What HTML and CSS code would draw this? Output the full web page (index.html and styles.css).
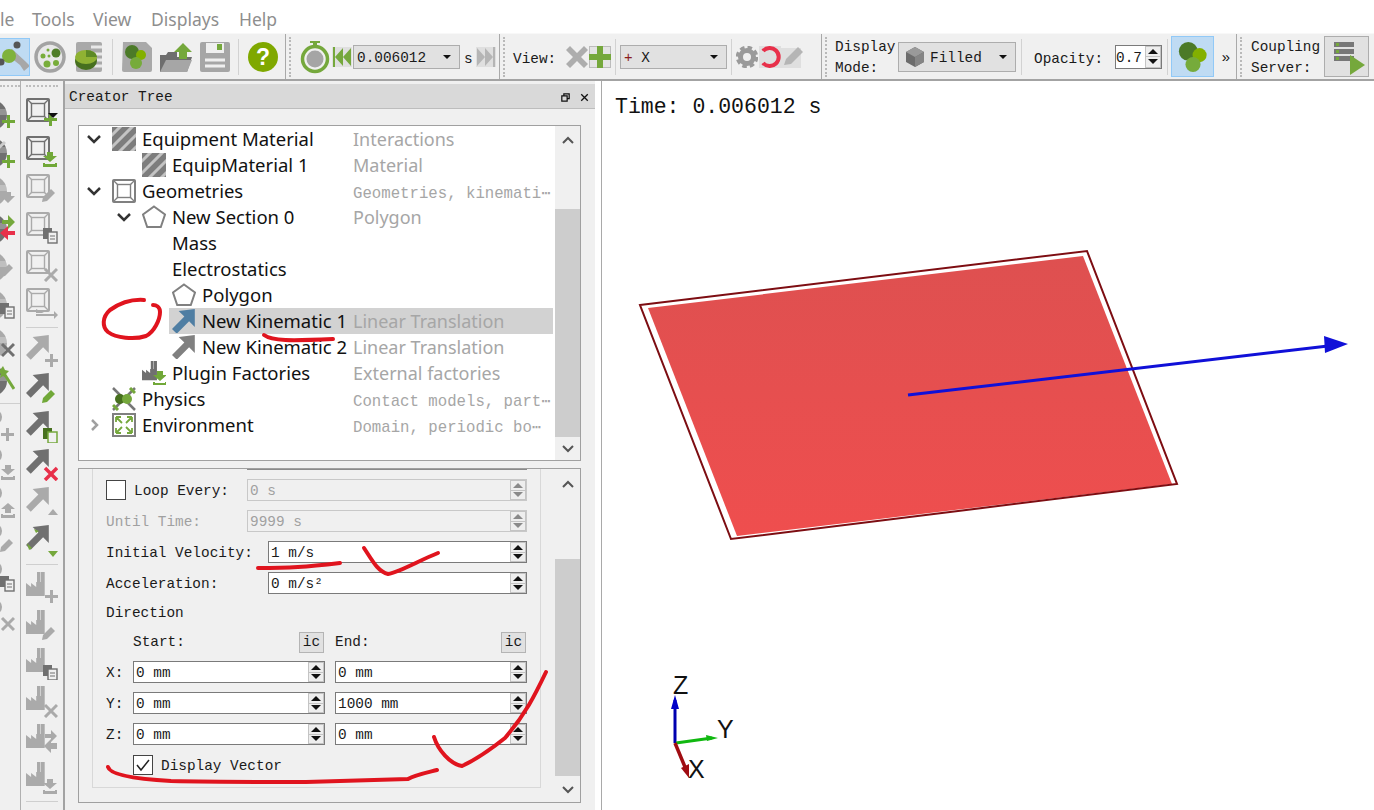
FILE: index.html
```html
<!DOCTYPE html>
<html lang="en">
<head>
<meta charset="utf-8">
<title>Creator Tree</title>
<link rel="stylesheet" href="styles.css">
</head>
<body>
<svg class="defs" aria-hidden="true">
  <defs>
    <g id="frame" fill="none" stroke="currentColor" stroke-width="2"><rect x="1" y="1" width="22" height="22" rx="1"/><rect x="5.5" y="5.5" width="13" height="13" stroke-width="1.4"/><path d="M1 1l4.5 4.5M23 1l-4.5 4.5M1 23l4.5-4.5M23 23l-4.5-4.5" stroke-width="1.4"/></g>
    <g id="arrow" fill="currentColor"><path d="M24 0v19l-6-6L5 26l-5-5L13 8 7 2z" transform="scale(.95)"/></g>
    <g id="factory" fill="currentColor"><path d="M0 24V11l6 4V11l6 4V10h2V0h3v10h2V0h-0 3v24z" transform="scale(.85 1)"/><rect x="11" y="0" width="2.4" height="14"/><rect x="15" y="0" width="2.4" height="14"/></g>
    <g id="sphere"><circle cx="9" cy="17" r="15" fill="currentColor"/><path d="M9 2v15H-6v-6h30v6H9v15H3V2z" fill="#fff" opacity=".25"/></g>
    <g id="bplus" fill="currentColor"><path d="M5 0h3v5h5v3H8v5H5V8H0V5h5z"/></g>
    <g id="bx" fill="none" stroke="currentColor" stroke-width="3"><path d="M1 1l12 12M13 1L1 13"/></g>
    <g id="bpen" fill="currentColor"><path d="M0 14l1-5L9 1l4 4-8 8z"/></g>
    <g id="bcopy"><rect x="0" y="0" width="9" height="11" fill="currentColor"/><rect x="5" y="4" width="9" height="11" fill="#f0f0f0" stroke="currentColor" stroke-width="1.4"/><path d="M7 8h5M7 11h5" stroke="currentColor"/></g>
    <g id="bdown" fill="currentColor"><path d="M4 0h6v4h4l-7 6-7-6h4z"/><path d="M0 11h2v1h10v-1h2v4H0z"/></g>
    <g id="bup" fill="currentColor"><path d="M7 0l7 6h-4v4H4V6H0z"/><path d="M0 11h2v1h10v-1h2v4H0z"/></g>
    <g id="hatch"><rect width="24" height="24" fill="#7d7d7d"/><path d="M-2 10L10-2M-2 22L22-2M6 26L26 6M18 26l8-8" stroke="#c4c4c4" stroke-width="3"/></g>
    <g id="pent" fill="none" stroke="#808080" stroke-width="2"><path d="M12 1.5l11 8-4.2 12.5H5.2L1 9.500z"/></g>
  </defs>
</svg>

<div class="menubar">
  <span class="menu m-file">le</span><span class="menu m-tools">Tools</span><span class="menu m-view">View</span><span class="menu m-disp">Displays</span><span class="menu">Help</span>
</div>

<div class="toolbar">
  <div class="sec sec-a">
    <div class="selbtn sel-a">
      <svg class="i32" viewBox="0 0 32 32"><path d="M6 13L20 24l4 6 6-5-5-5-13-12z" fill="#a7a7a7"/><circle cx="9" cy="15" r="7" fill="#7fb23c"/><circle cx="1" cy="21" r="3.500" fill="#555"/><circle cx="17" cy="4" r="3.500" fill="#555"/></svg>
    </div>
    <svg class="i32" viewBox="0 0 32 32"><circle cx="16" cy="16" r="14" fill="#e8e8e8" stroke="#a3a3a3" stroke-width="3.500"/><circle cx="22" cy="12" r="4.500" fill="#4f7d28"/><circle cx="13" cy="23" r="3.500" fill="#78ad3a"/><circle cx="22" cy="22" r="3" fill="#78ad3a"/><circle cx="9" cy="15" r="2.500" fill="#78ad3a"/><circle cx="14" cy="9" r="1.500" fill="#78ad3a"/><circle cx="15" cy="15" r="1.500" fill="#78ad3a"/></svg>
    <svg class="i32" viewBox="0 0 32 32"><rect x="3" y="1" width="26" height="30" rx="2" fill="#a9a9a9"/><path d="M18 6h11M20 13h9M20 19h9M20 25h9" stroke="#e8e8e8" stroke-width="3"/><ellipse cx="13" cy="20" rx="11" ry="9" fill="#47701f"/><ellipse cx="13" cy="16" rx="11" ry="7" fill="#8fb233"/><path d="M13 16V9a11 7 0 0 1 11 7z" fill="#5d8a26"/></svg>
    <div class="vsep"></div>
    <svg class="i32" viewBox="0 0 32 32"><path d="M2 1h23l6 6v22a2 2 0 0 1-2 2H3a2 2 0 0 1-2-2z" fill="#a9a9a9"/><circle cx="11" cy="11" r="7" fill="#4c7a28"/><circle cx="20" cy="14" r="5" fill="#83b000"/><circle cx="15" cy="22" r="6" fill="#76ab3b"/></svg>
    <svg class="i32" viewBox="0 0 32 32"><path d="M0 31V14h6l2-3h9v5h15l-5 15z" fill="#6e6e6e"/><path d="M0 31l6-12h26l-5 12z" fill="#a6a6a6"/><path d="M23 2l9 9h-5v7h-8v-7h-5z" fill="#75a83c"/></svg>
    <svg class="i32" viewBox="0 0 32 32"><path d="M3 1h26a2 2 0 0 1 2 2v26a2 2 0 0 1-2 2H3a2 2 0 0 1-2-2V3a2 2 0 0 1 2-2z" fill="#a6a6a6"/><rect x="7" y="2" width="18" height="10" fill="#efefef"/><rect x="18" y="3" width="5" height="6" fill="#75a83c"/><path d="M6 19h20M6 25h20" stroke="#efefef" stroke-width="3"/></svg>
    <div class="vsep"></div>
    <svg class="i32" viewBox="0 0 32 32"><circle cx="16" cy="16" r="15" fill="#7fa800"/><text x="16" y="24" class="qmark" text-anchor="middle">?</text></svg>
  </div>

  <div class="sec sec-b">
    <div class="handle"></div>
    <svg class="i30" viewBox="0 0 30 34"><path d="M10 1h10v2h-3v4h-4V3h-3z" fill="#75a83c"/><circle cx="15" cy="19" r="12.500" fill="none" stroke="#75a83c" stroke-width="3.500"/><circle cx="15" cy="19" r="8.500" fill="#a5a5a5"/></svg>
    <svg class="i20 ml2" viewBox="0 0 20 20"><rect width="20" height="20" fill="#dfdfdf"/><path d="M1 0h2v20H1zM11 1v18L3 10zM19 1v18l-8-9z" fill="#75a83c"/></svg>
    <div class="combo combo-time ml1"><span class="combo-text">0.006012</span><span class="tri"></span></div>
    <span class="mono ml4 tb-text">s</span>
    <svg class="i20 ml3" viewBox="0 0 20 20"><rect width="20" height="20" fill="#dfdfdf"/><path d="M1 1l8 9-8 9zM9 1l8 9-8 9zM17 0h2v20h-2z" fill="#b5b5b5"/></svg>
  </div>

  <div class="sec sec-c">
    <div class="handle"></div>
    <span class="mono ml7 w-view tb-text">View:</span>
    <svg class="i22 ml10" viewBox="0 0 22 22"><path d="M4 0l7 7 7-7 4 4-7 7 7 7-4 4-7-7-7 7-4-4 7-7-7-7z" fill="#adadad"/></svg>
    <svg class="i22 ml1" viewBox="0 0 22 22"><rect x=".5" y=".5" width="21" height="21" fill="#e4e4e4" stroke="#bcbcbc"/><path d="M8 0h6v8h8v6h-8v8H8v-8H0V8h8z" fill="#75a83c"/></svg>
    <div class="vsep ml4"></div>
    <div class="combo combo-view ml4"><span class="combo-text"><span class="plus">+</span> X</span><span class="tri"></span></div>
    <div class="vsep ml4"></div>
    <svg class="i22 ml4" viewBox="0 0 22 22"><circle cx="11" cy="11" r="6.500" fill="none" stroke="#9a9a9a" stroke-width="5"/><circle cx="11" cy="11" r="9.500" fill="none" stroke="#9a9a9a" stroke-width="3.500" stroke-dasharray="4.500 3"/></svg>
    <svg class="i22 ml1" viewBox="0 0 22 22"><rect width="22" height="22" fill="#dfdfdf"/><path d="M4 5a9 9 0 1 1 0 12" fill="none" stroke="#e8304a" stroke-width="4"/></svg>
    <svg class="i22" viewBox="0 0 22 22"><rect y="2" width="20" height="20" fill="#dfdfdf"/><path d="M3 19l2-6L17 1l5 5-12 12z" fill="#b5b5b5"/></svg>
  </div>

  <div class="sec sec-d">
    <div class="handle"></div>
    <div class="mono two ml7 w-disp"><span>Display</span><span>Mode:</span></div>
    <div class="combo combo-filled"><svg class="i22" viewBox="0 0 22 22"><path d="M11 1l9 5v10l-9 5-9-5V6z" fill="#6c6c6c"/><path d="M11 1l9 5-9 5-9-5z" fill="#9a9a9a"/><path d="M11 11l9-5v10l-9 5z" fill="#858585"/></svg><span class="combo-text tight">Filled</span><span class="tri"></span></div>
    <div class="vsep ml5"></div>
    <span class="mono ml12 w-op tb-text">Opacity:</span>
    <div class="opbox"><span class="mono">0.7</span><span class="arrows"><span class="up"></span><span class="down"></span></span></div>
    <div class="vsep ml5"></div>
    <div class="selbtn sel-b ml3">
      <svg class="i32" viewBox="0 0 32 34"><circle cx="11" cy="11" r="10" fill="#4c7a28"/><circle cx="23" cy="15" r="7.500" fill="#83b000"/><circle cx="16" cy="25" r="8" fill="#76ab3b"/></svg>
    </div>
    <span class="more">»</span>
  </div>

  <div class="sec sec-e">
    <div class="handle"></div>
    <div class="mono two ml8 w-coup"><span>Coupling</span><span>Server:</span></div>
    <div class="srv">
      <svg class="i38" viewBox="0 0 38 36"><path d="M6 3h20v5H6zM6 10h20v5H6zM6 17h20v5H6z" fill="#777"/><path d="M8 4h3v3H8zM8 11h3v3H8zM8 18h3v3H8z" fill="#75a83c"/><path d="M22 16l15 10-15 10z" fill="#75a83c"/></svg>
    </div>
  </div>
</div>

<div class="main">
  <div class="side side-1">
    <div class="vhandle"></div>
    <div class="col">
      <div class="tool"><svg class="i32 shift" viewBox="0 0 32 32"><use href="#sphere" class="c-dk"/><use href="#bplus" x="19" y="17" class="c-g"/></svg></div>
      <div class="tool"><svg class="i32 shift" viewBox="0 0 32 32"><use href="#sphere" class="c-dk"/><path d="M3 24L22 6M0 15L12 3" stroke="#ccc" stroke-width="3"/><use href="#bplus" x="19" y="19" class="c-g"/></svg></div>
      <div class="tool"><svg class="i32 shift" viewBox="0 0 32 32"><use href="#sphere" class="c-lt"/><path d="M22 18h6v4h4l-7 7-7-7h4z" class="f-lt"/></svg></div>
      <div class="tool"><svg class="i32 shift" viewBox="0 0 32 32"><use href="#sphere" class="c-dk"/><path d="M19 8h6V3l7 7-7 7v-5h-6z" fill="#75a83c"/><path d="M32 19h-7v-5l-8 7 8 7v-5h7z" fill="#e8304a"/></svg></div>
      <div class="tool"><svg class="i32 shift" viewBox="0 0 32 32"><use href="#sphere" class="c-lt"/><use href="#bpen" x="17" y="13" class="c-lt"/></svg></div>
      <div class="tool"><svg class="i32 shift" viewBox="0 0 32 32"><use href="#sphere" class="c-lt"/><use href="#bcopy" x="17" y="15" class="c-dk"/></svg></div>
      <div class="tool"><svg class="i32 shift" viewBox="0 0 32 32"><use href="#sphere" class="c-lt"/><use href="#bx" x="18" y="17" class="c-dk"/></svg></div>
      <div class="tool"><svg class="i32 shift" viewBox="0 0 32 32"><use href="#sphere" class="c-dk"/><path d="M17 6l3-4 2 4 4 1-3 3 1 4-4-2-3 2 1-4-3-3z" fill="#75a83c"/><path d="M22 11l9 14" stroke="#75a83c" stroke-width="3"/></svg></div>
    </div>
    <div class="hsep"></div>
    <div class="col">
      <div class="tool"><svg class="i32 shift" viewBox="0 0 32 32"><circle cx="11" cy="6" r="8" class="f-lt"/><use href="#bplus" x="18" y="17" class="c-lt"/></svg></div>
      <div class="tool"><svg class="i32 shift" viewBox="0 0 32 32"><circle cx="11" cy="6" r="8" class="f-lt"/><use href="#bdown" x="18" y="16" class="c-lt"/></svg></div>
      <div class="tool"><svg class="i32 shift" viewBox="0 0 32 32"><circle cx="11" cy="6" r="8" class="f-lt"/><use href="#bup" x="18" y="16" class="c-lt"/></svg></div>
      <div class="tool"><svg class="i32 shift" viewBox="0 0 32 32"><circle cx="11" cy="6" r="8" class="f-lt"/><use href="#bpen" x="17" y="13" class="c-lt"/></svg></div>
      <div class="tool"><svg class="i32 shift" viewBox="0 0 32 32"><circle cx="11" cy="6" r="8" class="f-lt"/><use href="#bcopy" x="17" y="13" class="c-dk"/></svg></div>
      <div class="tool"><svg class="i32 shift" viewBox="0 0 32 32"><circle cx="11" cy="6" r="8" class="f-lt"/><use href="#bx" x="18" y="16" class="c-lt"/></svg></div>
    </div>
  </div>

  <div class="side side-2">
    <div class="vhandle"></div>
    <div class="col">
      <div class="tool"><svg class="i32" viewBox="0 0 32 32"><use href="#frame" class="c-dk"/><use href="#bplus" x="18" y="15" class="c-g"/><path d="M22 15h10l-5 5z" fill="#111"/></svg></div>
      <div class="tool"><svg class="i32" viewBox="0 0 32 32"><use href="#frame" class="c-dk"/><use href="#bdown" x="17" y="16" class="c-g"/></svg></div>
      <div class="tool"><svg class="i32" viewBox="0 0 32 32"><use href="#frame" class="c-lt"/><use href="#bpen" x="16" y="14" class="c-lt"/></svg></div>
      <div class="tool"><svg class="i32" viewBox="0 0 32 32"><use href="#frame" class="c-lt"/><use href="#bcopy" x="17" y="16" class="c-dk"/></svg></div>
      <div class="tool"><svg class="i32" viewBox="0 0 32 32"><use href="#frame" class="c-lt"/><use href="#bx" x="18" y="18" class="c-lt"/></svg></div>
      <div class="tool"><svg class="i32" viewBox="0 0 32 32"><use href="#frame" class="c-lt"/><path d="M10 21l8 4h-8zM10 26h18v-3l4 4-4 4v-3H10z" class="f-lt"/></svg></div>
    </div>
    <div class="hsep"></div>
    <div class="col">
      <div class="tool"><svg class="i32" viewBox="0 0 32 32"><use href="#arrow" class="c-lt"/><use href="#bplus" x="19" y="19" class="c-lt"/></svg></div>
      <div class="tool"><svg class="i32" viewBox="0 0 32 32"><use href="#arrow" class="c-dk"/><use href="#bpen" x="16" y="16" class="c-g"/></svg></div>
      <div class="tool"><svg class="i32" viewBox="0 0 32 32"><use href="#arrow" class="c-dk"/><rect x="17" y="17" width="9" height="11" fill="#47701f"/><rect x="22" y="21" width="9" height="11" fill="#f0f0f0" stroke="#75a83c" stroke-width="1.500"/></svg></div>
      <div class="tool"><svg class="i32" viewBox="0 0 32 32"><use href="#arrow" class="c-dk"/><path d="M19 19l12 12M31 19L19 31" stroke="#e8304a" stroke-width="3.500"/></svg></div>
      <div class="tool"><svg class="i32" viewBox="0 0 32 32"><use href="#arrow" class="c-lt"/><path d="M22 28l5-6 5 6z" class="f-lt"/></svg></div>
      <div class="tool"><svg class="i32" viewBox="0 0 32 32"><use href="#arrow" class="c-dk"/><path d="M1 18l5 5-3 2zM8 4l5 2-3 2zM22 26h10l-5 6z" fill="#75a83c"/></svg></div>
    </div>
    <div class="hsep"></div>
    <div class="col">
      <div class="tool"><svg class="i32" viewBox="0 0 32 32"><use href="#factory" class="c-lt"/><use href="#bplus" x="19" y="18" class="c-lt"/></svg></div>
      <div class="tool"><svg class="i32" viewBox="0 0 32 32"><use href="#factory" class="c-lt"/><use href="#bpen" x="16" y="16" class="c-lt"/></svg></div>
      <div class="tool"><svg class="i32" viewBox="0 0 32 32"><use href="#factory" class="c-lt"/><use href="#bcopy" x="17" y="17" class="c-dk"/></svg></div>
      <div class="tool"><svg class="i32" viewBox="0 0 32 32"><use href="#factory" class="c-lt"/><use href="#bx" x="18" y="18" class="c-lt"/></svg></div>
      <div class="tool"><svg class="i32" viewBox="0 0 32 32"><use href="#factory" class="c-lt"/><path d="M19 10h6V6l6 6-6 6v-4h-6zM31 19h-6v-4l-7 7 7 7v-4h6z" class="f-lt"/></svg></div>
      <div class="tool"><svg class="i32" viewBox="0 0 32 32"><use href="#factory" class="c-lt"/><use href="#bdown" x="17" y="17" class="c-lt"/></svg></div>
    </div>
    <div class="hsep"></div>
  </div>

  <div class="dock">
    <div class="dock-title">
      <span class="mono">Creator Tree</span>
      <span class="dock-btns">
        <svg class="i11" viewBox="0 0 11 11"><path d="M3.500 3V1h6.500v6H8M1 3.500h6.500V10H1z" fill="none" stroke="#111" stroke-width="1.500"/></svg>
        <svg class="i11" viewBox="0 0 11 11"><path d="M1.500 1.500l8 8M9.500 1.500l-8 8" stroke="#111" stroke-width="1.600"/></svg>
      </span>
    </div>

    <div class="panel tree-panel">
      <div class="tree">
        <div class="row l0"><span class="chev"><svg class="i14" viewBox="0 0 14 14"><path d="M1 4l6 6 6-6" class="chev-d"/></svg></span><div class="body"><svg class="i24" viewBox="0 0 24 24"><use href="#hatch"/></svg><span class="name">Equipment Material</span><span class="desc">Interactions</span></div></div>
        <div class="row l1"><span class="chev"></span><div class="body"><svg class="i24" viewBox="0 0 24 24"><use href="#hatch"/></svg><span class="name">EquipMaterial 1</span><span class="desc">Material</span></div></div>
        <div class="row l0"><span class="chev"><svg class="i14" viewBox="0 0 14 14"><path d="M1 4l6 6 6-6" class="chev-d"/></svg></span><div class="body"><svg class="i24 c-md" viewBox="0 0 24 24"><use href="#frame"/></svg><span class="name">Geometries</span><span class="desc mono-desc">Geometries, kinemati⋯</span></div></div>
        <div class="row l1"><span class="chev"><svg class="i14" viewBox="0 0 14 14"><path d="M1 4l6 6 6-6" class="chev-d"/></svg></span><div class="body"><svg class="i24" viewBox="0 0 24 24"><use href="#pent"/></svg><span class="name">New Section 0</span><span class="desc">Polygon</span></div></div>
        <div class="row l1"><span class="chev"></span><div class="body"><span class="noicon"></span><span class="name">Mass</span></div></div>
        <div class="row l1"><span class="chev"></span><div class="body"><span class="noicon"></span><span class="name">Electrostatics</span></div></div>
        <div class="row l2"><div class="body"><svg class="i24" viewBox="0 0 24 24"><use href="#pent"/></svg><span class="name">Polygon</span></div></div>
        <div class="row l2"><div class="body selected"><svg class="i24" viewBox="0 0 24 24"><path d="M24 0v19l-6-6L5 26l-5-5L13 8 7 2z" fill="#4f7ea3" transform="scale(.95)"/></svg><span class="name">New Kinematic 1</span><span class="desc">Linear Translation</span></div></div>
        <div class="row l2"><div class="body"><svg class="i24 c-md" viewBox="0 0 24 24"><use href="#arrow"/></svg><span class="name">New Kinematic 2</span><span class="desc">Linear Translation</span></div></div>
        <div class="row l1"><span class="chev"></span><div class="body"><svg class="i24 c-dk" viewBox="0 0 24 24"><g transform="scale(.8)"><use href="#factory"/></g><use href="#bdown" x="11" y="10" class="c-g"/></svg><span class="name">Plugin Factories</span><span class="desc">External factories</span></div></div>
        <div class="row l0"><span class="chev"></span><div class="body"><svg class="i24" viewBox="0 0 24 24"><path d="M1 1l22 22M23 1L1 23" stroke="#777" stroke-width="2.500"/><path d="M1 18l5 5M18 1l5 5" stroke="#75a83c" stroke-width="3"/><circle cx="8" cy="12" r="5" fill="#47701f"/><circle cx="15" cy="12" r="5" fill="#75a83c"/></svg><span class="name">Physics</span><span class="desc mono-desc">Contact models, part⋯</span></div></div>
        <div class="row l0"><span class="chev"><svg class="i14" viewBox="0 0 14 14"><path d="M5 2l5 5-5 5" class="chev-r"/></svg></span><div class="body"><svg class="i24" viewBox="0 0 24 24"><rect x="1" y="1" width="22" height="22" fill="none" stroke="#808080" stroke-width="2"/><path d="M4 4l6 6M20 4l-6 6M4 20l6-6M20 20l-6-6M4 4h5M4 4v5M20 4h-5M20 4v5M4 20h5M4 20v-5M20 20h-5M20 20v-5" stroke="#75a83c" stroke-width="1.800" fill="none"/></svg><span class="name">Environment</span><span class="desc mono-desc">Domain, periodic bo⋯</span></div></div>
      </div>
      <div class="sb sb-tree">
        <div class="sb-btn top"><svg class="i12" viewBox="0 0 12 12"><path d="M1 9l5-5 5 5" class="chev-s"/></svg></div>
        <div class="thumb"></div>
        <div class="sb-btn bottom"><svg class="i12" viewBox="0 0 12 12"><path d="M1 3l5 5 5-5" class="chev-s"/></svg></div>
      </div>
    </div>

    <div class="panel form-panel">
      <div class="form-scroll">
        <div class="group">
          <div class="clipline"></div>
          <div class="frow first dis-row">
            <span class="check"></span><span class="mono loop">Loop Every:</span>
            <div class="spin disabled"><span class="mono">0 s</span><span class="arrows"><span class="up"></span><span class="down"></span></span></div>
          </div>
          <div class="frow dis-row">
            <span class="mono lab-a dim">Until Time:</span>
            <div class="spin disabled"><span class="mono">9999 s</span><span class="arrows"><span class="up"></span><span class="down"></span></span></div>
          </div>
          <div class="frow">
            <span class="mono lab-b">Initial Velocity:</span>
            <div class="spin"><span class="mono">1 m/s</span><span class="arrows"><span class="up"></span><span class="down"></span></span></div>
          </div>
          <div class="frow">
            <span class="mono lab-b">Acceleration:</span>
            <div class="spin"><span class="mono">0 m/s²</span><span class="arrows"><span class="up"></span><span class="down"></span></span></div>
          </div>
          <div class="mono dir">Direction</div>
          <div class="se-row">
            <div class="se-cell"><span class="mono">Start:</span><span class="ic mono">ic</span></div>
            <div class="se-cell end"><span class="mono">End:</span><span class="ic mono">ic</span></div>
          </div>
          <div class="frow xyz first-xyz">
            <span class="mono lab-x">X:</span>
            <div class="spin"><span class="mono">0 mm</span><span class="arrows"><span class="up"></span><span class="down"></span></span></div>
            <div class="spin"><span class="mono">0 mm</span><span class="arrows"><span class="up"></span><span class="down"></span></span></div>
          </div>
          <div class="frow xyz">
            <span class="mono lab-x">Y:</span>
            <div class="spin"><span class="mono">0 mm</span><span class="arrows"><span class="up"></span><span class="down"></span></span></div>
            <div class="spin"><span class="mono">1000 mm</span><span class="arrows"><span class="up"></span><span class="down"></span></span></div>
          </div>
          <div class="frow xyz">
            <span class="mono lab-x">Z:</span>
            <div class="spin"><span class="mono">0 mm</span><span class="arrows"><span class="up"></span><span class="down"></span></span></div>
            <div class="spin"><span class="mono">0 mm</span><span class="arrows"><span class="up"></span><span class="down"></span></span></div>
          </div>
          <div class="vec-row">
            <span class="check"><svg class="i16" viewBox="0 0 16 16"><path d="M2 8l4 5 8-10" fill="none" stroke="#222" stroke-width="1.500"/></svg></span>
            <span class="mono">Display Vector</span>
          </div>
        </div>
      </div>
      <div class="sb sb-form">
        <div class="sb-btn top"><svg class="i12" viewBox="0 0 12 12"><path d="M1 9l5-5 5 5" class="chev-s"/></svg></div>
        <div class="thumb"></div>
        <div class="sb-btn bottom"><svg class="i12" viewBox="0 0 12 12"><path d="M1 3l5 5 5-5" class="chev-s"/></svg></div>
      </div>
    </div>
  </div>

  <div class="viewport">
    <div class="time">Time: 0.006012 s</div>
    <svg class="scene" viewBox="602 81 772 729">
      <defs>
        <linearGradient id="plate" x1="0" y1="0" x2="0" y2="1"><stop offset="0" stop-color="#de5050"/><stop offset="1" stop-color="#ef4e4e"/></linearGradient>
      </defs>
      <polygon points="648,308 1083,256 1172,484 737,536" fill="url(#plate)"/>
      <polygon points="640,305 1087,251 1177,484 731,539" fill="none" stroke="#7d0d12" stroke-width="2"/>
      <path d="M908 395L1328 346" stroke="#1010d8" stroke-width="3"/>
      <path d="M1324 336l24 8-23 9z" fill="#1010d8"/>
      <path d="M675 743V700" stroke="#0000b0" stroke-width="3"/>
      <path d="M675 695l-4 14h8z" fill="#0000c8"/>
      <path d="M676 743l36-5" stroke="#10b810" stroke-width="3"/>
      <path d="M718 738l-12-3 1 6z" fill="#10b810"/>
      <path d="M675 743l10 24" stroke="#a00d12" stroke-width="3.500"/>
      <path d="M689 778l-8-10 8-4z" fill="#a00d12"/>
      <text x="673" y="694" class="ax">Z</text>
      <text x="717" y="738" class="ax">Y</text>
      <text x="688" y="778" class="ax">X</text>
    </svg>
  </div>
</div>

<svg class="ink" viewBox="0 0 1374 810" aria-hidden="true">
  <g fill="none" stroke="#e0141e" stroke-width="4" stroke-linecap="round" stroke-linejoin="round">
    <path d="M144 300C130 299 120 303 110 310C102 317 102 327 108 332C116 338 134 340 146 336C154 332 160 320 160 312C160 307 156 305 153 305"/>
    <path d="M264 335C272 341 290 341 333 339"/>
    <path d="M258 568C290 568 305 567 340 563"/>
    <path d="M364 548C372 560 378 572 388 574C400 572 420 560 438 553"/>
    <path d="M546 672C535 695 525 715 505 738C490 750 475 760 462 766C450 764 438 750 434 737"/>
    <path d="M108 767C110 775 135 779 171 781C220 782 270 782 306 782C350 781 380 780 408 779C415 775 425 773 437 770"/>
  </g>
</svg>
</body>
</html>
```

FILE: styles.css
```css
* { box-sizing: border-box; }
html, body { margin: 0; padding: 0; }
body {
  width: 1374px;
  height: 810px;
  overflow: hidden;
  background: #fff;
  display: flex;
  flex-direction: column;
  position: relative;
  font-family: "Noto Sans", sans-serif;
  color: #111;
}
.defs { display: none; }
svg { display: block; flex: none; }
.i32 { width: 32px; height: 32px; }
.i30 { width: 30px; height: 34px; }
.i24 { width: 24px; height: 24px; }
.i22 { width: 22px; height: 22px; }
.i20 { width: 20px; height: 20px; }
.i16 { width: 16px; height: 16px; }
.i14 { width: 14px; height: 14px; }
.i12 { width: 12px; height: 12px; }
.i11 { width: 9px; height: 9px; }
.i38 { width: 38px; height: 36px; }
.c-dk { color: #707070; }
.c-md { color: #808080; }
.c-lt { color: #aaaaaa; }
.c-g { color: #71a838; }
.f-lt { fill: #aaaaaa; }
.qmark { font: bold 23px "Liberation Sans", sans-serif; fill: #fff; }
.mono {
  font-family: "Liberation Mono", monospace;
  font-size: 14.4px;
  line-height: 18px;
  color: #1a1a1a;
  white-space: nowrap;
}

/* menu */
.menubar {
  height: 33px;
  display: flex;
  align-items: center;
  padding-top: 4px;
  font-size: 17.5px;
  color: #8e8e8e;
  flex: none;
}
.menu { white-space: nowrap; }
.m-file { width: 32px; }
.m-tools { width: 61px; }
.m-view { width: 58px; }
.m-disp { width: 88px; }

/* toolbar */
.toolbar {
  height: 48px;
  flex: none;
  display: flex;
  background: #f0f0f0;
  border-top: 1px solid #f8f8f8;
  border-bottom: 2px solid #a3a3a3;
}
.sec {
  display: flex;
  align-items: center;
  border-left: 1px solid #a9a9a9;
  padding-left: 3px;
}
.sec-a { width: 285px; border-left: 0; padding-left: 0; gap: 7px; }
.sec-b { width: 214px; }
.sec-c { width: 322px; }
.sec-d { width: 415px; }
.sec-e { flex: 1; }
.handle {
  width: 3px;
  height: 40px;
  border-left: 2px dotted #b9b9b9;
  flex: none;
}
.sec-b .handle { margin-right: 8px; }
.vsep { width: 1px; height: 36px; background: #d2d2d2; flex: none; }
.sec-a .vsep { margin-right: 1px; }
.ml1 { margin-left: 1px; }
.ml2 { margin-left: 2px; }
.ml3 { margin-left: 3px; }
.ml4 { margin-left: 4px; }
.ml5 { margin-left: 5px; }
.ml7 { margin-left: 7px; }
.ml8 { margin-left: 8px; }
.ml10 { margin-left: 10px; }
.ml12 { margin-left: 12px; }
.tb-text { padding-top: 4px; }
.selbtn {
  background: #bfdbf3;
  border: 1px solid #91c9f7;
  display: flex;
  align-items: center;
  justify-content: center;
  flex: none;
}
.sel-a { width: 30px; height: 38px; margin-right: -3px; border-left: 0; overflow: hidden; justify-content: flex-start; }
.sel-b { width: 43px; height: 41px; }
.combo {
  height: 24px;
  background: #e1e1e1;
  border: 1px solid #adadad;
  display: flex;
  align-items: center;
  flex: none;
  padding: 0 6px 0 3px;
}
.combo-time { width: 107px; }
.combo-view { width: 107px; }
.combo-filled { width: 118px; height: 30px; padding-left: 5px; }
.combo-text {
  font-family: "Liberation Mono", monospace;
  font-size: 14.4px;
  line-height: 18px;
  padding-top: 2px;
  color: #1a1a1a;
  flex: 1;
  white-space: nowrap;
}
.tight { margin-left: 4px; }
.plus { color: #8a1c1c; }
.tri {
  width: 0;
  height: 0;
  border-left: 4px solid transparent;
  border-right: 4px solid transparent;
  border-top: 4px solid #111;
  margin-right: 2px;
}
.w-view { width: 43px; }
.w-disp { width: 63px; }
.w-op { width: 81px; }
.w-coup { width: 73px; }
.two { display: flex; flex-direction: column; line-height: 21px; padding-top: 3px; }
.opbox {
  width: 47px;
  height: 24px;
  background: #fff;
  border: 1px solid #7a7a7a;
  display: flex;
  align-items: stretch;
  justify-content: space-between;
  flex: none;
}
.opbox .mono { line-height: 24px; }
.more { width: 16px; text-align: right; font: 15px "Liberation Sans", sans-serif; color: #111; flex: none; }
.srv {
  width: 45px;
  height: 41px;
  background: #e1e1e1;
  border: 1px solid #adadad;
  display: flex;
  align-items: center;
  justify-content: center;
  flex: none;
}

/* main */
.main { flex: 1; display: flex; min-height: 0; }
.side {
  background: #f0f0f0;
  overflow: hidden;
  flex: none;
}
.side-1 { width: 21px; border-right: 1px solid #b0b0b0; }
.side-2 { width: 44px; border-right: 2px solid #a3a3a3; padding: 0 5px; }
.vhandle {
  height: 14px;
  border-top: 2px dotted #bdbdbd;
  margin-top: 4px;
  margin-bottom: -4px;
}
.col { display: flex; flex-direction: column; }
.tool { height: 38px; padding-top: 3px; }
.shift { margin-left: -17px; }
.hsep { height: 9px; margin-bottom: -4px; position: relative; }
.hsep::after {
  content: "";
  display: block;
  height: 1px;
  background: #cfcfcf;
  margin-top: 4px;
}

/* dock */
.dock {
  width: 530px;
  flex: none;
  background: #f0f0f0;
  display: flex;
  flex-direction: column;
  border-top: 2px solid #f0f0f0;
}
.dock-title {
  height: 25px;
  flex: none;
  margin-top: 1px;
  background: #d9d9d9;
  border-bottom: 1px solid #bdbdbd;
  display: flex;
  align-items: center;
  justify-content: space-between;
  padding: 2px 6px 0 4px;
}
.dock-btns { display: flex; gap: 10px; }
.panel {
  margin-left: 13px;
  width: 503px;
  background: #fff;
  border: 1px solid #a0a0a0;
  display: flex;
  flex: none;
}
.tree-panel { height: 336px; margin-top: 16px; }
.form-panel { height: 335px; margin-top: 7px; background: #f0f0f0; }
.tree { flex: 1; padding-right: 2px; min-width: 0; }
.row {
  height: 26px;
  display: flex;
  align-items: stretch;
  font-size: 18px;
  line-height: 26px;
}
.row .body { flex: 1; display: flex; align-items: center; min-width: 0; }
.chev { width: 27px; flex: none; display: flex; align-items: center; padding-left: 2px; }
.l0 { padding-left: 6px; }
.l1 { padding-left: 36px; }
.l2 { padding-left: 90px; }
.l2 .body { padding-left: 3px; }
.selected { background: #d2d2d2; }
.noicon { width: 24px; flex: none; }
.name { margin-left: 6px; white-space: nowrap; flex: none; font-size: 18.5px; }
.l0 .name { width: 211px; }
.l1 .name { width: 181px; }
.l2 .name { width: 151px; }
.desc { color: #a6a6a6; white-space: nowrap; overflow: hidden; }
.mono-desc { font-family: "Liberation Mono", monospace; font-size: 15.700px; padding-top: 5px; }
.chev-d { fill: none; stroke: #333; stroke-width: 2.500; }
.chev-r { fill: none; stroke: #a0a0a0; stroke-width: 2.500; }
.chev-s { fill: none; stroke: #555; stroke-width: 2; }
.sb {
  width: 25px;
  flex: none;
  background: #f0f0f0;
  display: flex;
  flex-direction: column;
}
.sb-btn { display: flex; align-items: center; justify-content: center; flex: none; }
.thumb { background: #cdcdcd; flex: none; }
.sb-tree .top { height: 28px; }
.sb-tree .thumb { height: 228px; margin-top: 55px; }
.sb-tree .bottom { height: 23px; margin-top: auto; }
.sb-form .top { height: 30px; }
.sb-form .thumb { height: 217px; margin-top: 60px; }
.sb-form .bottom { height: 25px; margin-top: auto; }

/* form */
.form-scroll { flex: 1; padding-left: 13px; padding-right: 14px; }
.group {
  height: 319px;
  border: 1px solid #d8d8d8;
  border-top: 0;
  padding: 0 13px;
  display: flex;
  flex-direction: column;
}
.clipline { height: 1px; background: #8a8a8a; margin-left: 141px; flex: none; }
.frow { height: 22px; margin-top: 9px; display: flex; align-items: center; flex: none; }
.frow > .mono, .vec-row > .mono { padding-top: 2px; }
.spin {
  flex: 1;
  height: 22px;
  background: #fff;
  border: 1px solid #7a7a7a;
  display: flex;
  align-items: stretch;
  justify-content: space-between;
  min-width: 0;
  padding-left: 2px;
}
.spin .mono { line-height: 22px; }
.spin.disabled { background: #f0f0f0; border-color: #c8c8c8; }
.spin.disabled .mono { color: #a0a0a0; }
.arrows { width: 16px; flex: none; display: flex; flex-direction: column; border: 1px solid #c4c4c4; background: #eee; }
.arrows span { flex: 1; display: flex; align-items: center; justify-content: center; }
.arrows .up { border-bottom: 1px solid #c4c4c4; }
.up::after, .down::after {
  content: "";
  width: 0;
  height: 0;
  border-left: 5px solid transparent;
  border-right: 5px solid transparent;
}
.up::after { border-bottom: 5px solid #111; }
.down::after { border-top: 5px solid #111; }
.disabled .up::after { border-bottom-color: #8a8a8a; }
.disabled .down::after { border-top-color: #8a8a8a; }
.check {
  width: 20px;
  height: 20px;
  flex: none;
  background: #fff;
  border: 1px solid #444;
  display: flex;
  align-items: center;
  justify-content: center;
}
.loop { margin-left: 8px; width: 113px; flex: none; }
.lab-a { width: 141px; flex: none; }
.frow > .dim { color: #a0a0a0; }
.lab-b { width: 162px; flex: none; }
.lab-x { width: 27px; flex: none; }
.dir { margin-top: 9px; height: 18px; padding-top: 1px; flex: none; }
.se-row { margin-top: 11px; height: 21px; padding-left: 27px; display: flex; gap: 10px; flex: none; }
.se-cell { width: 192px; display: flex; align-items: center; justify-content: space-between; }
.se-cell > .mono:first-child { padding-bottom: 2px; }
.se-cell .ic { margin-right: 1px; }
.ic {
  width: 25px;
  height: 21px;
  background: #e1e1e1;
  border: 1px solid #b4b4b4;
  text-align: center;
  line-height: 18px;
}
.first-xyz { margin-top: 8px; }
.xyz .spin { flex: none; width: 192px; }
.xyz .spin + .spin { margin-left: 10px; }
.vec-row { margin-top: 10px; padding-left: 27px; display: flex; align-items: center; gap: 8px; height: 20px; flex: none; }

/* viewport */
.viewport {
  flex: 1;
  margin-left: 6px;
  background: #fff;
  border-left: 1px solid #a9a9a9;
  position: relative;
  min-width: 0;
}
.time {
  font-family: "Liberation Mono", monospace;
  font-size: 21.500px;
  line-height: 26px;
  color: #111;
  padding: 13px 0 0 13px;
  position: relative;
  white-space: nowrap;
}
.scene { position: absolute; left: 0; top: 0; width: 772px; height: 729px; }
.ax { font: 25px "Liberation Sans", sans-serif; fill: #111; }
.ink { position: absolute; left: 0; top: 0; width: 1374px; height: 810px; pointer-events: none; }
```
